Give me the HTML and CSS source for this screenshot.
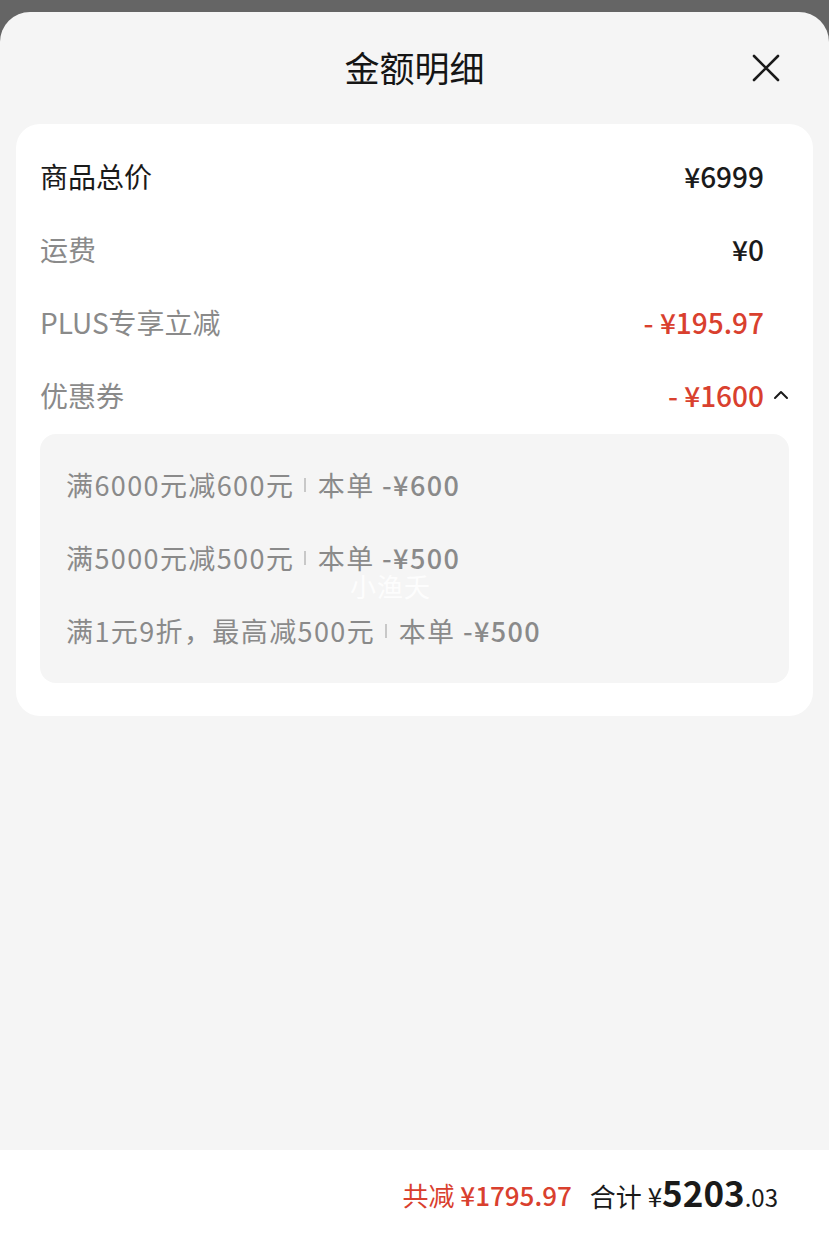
FILE: index.html
```html
<!DOCTYPE html>
<html lang="zh-CN">
<head>
<meta charset="utf-8">
<link rel="stylesheet" href="styles.css">
</head>
<body>
<div class="topstrip"></div>
<div class="panel">
  <div class="header">
    <div class="title">金额明细</div>
    <svg class="close" width="30" height="30" viewBox="0 0 30 30"><path d="M3 3 L27 27 M27 3 L3 27" stroke="#1a1a1a" stroke-width="2.6" fill="none" stroke-linecap="round"/></svg>
  </div>
  <div class="card">
    <div class="row">
      <span class="label dark">商品总价</span>
      <span class="value dark">¥6999</span>
      <span class="slot"></span>
    </div>
    <div class="row">
      <span class="label">运费</span>
      <span class="value dark">¥0</span>
      <span class="slot"></span>
    </div>
    <div class="row">
      <span class="label">PLUS专享立减</span>
      <span class="value red">- ¥195.97</span>
      <span class="slot"></span>
    </div>
    <div class="row">
      <span class="label">优惠券</span>
      <span class="value red">- ¥1600</span>
      <span class="slot"><svg width="16" height="12" viewBox="0 0 16 12"><path d="M2 9 L8 3 L14 9" stroke="#1a1a1a" stroke-width="2" fill="none" stroke-linecap="round" stroke-linejoin="round"/></svg></span>
    </div>
    <div class="coupons">
      <div class="cline">满6000元减600元<i class="sep"></i>本单 <em>-¥600</em></div>
      <div class="cline">满5000元减500元<i class="sep"></i>本单 <em>-¥500</em></div>
      <div class="cline">满1元9折，最高减500元<i class="sep"></i>本单 <em>-¥500</em></div>
      <div class="watermark">小渔夭</div>
    </div>
  </div>
  <div class="spacer"></div>
  <div class="footer">
    <span class="save">共减 <em>¥1795.97</em></span>
    <span class="total">合计 ¥<b>5203</b><small>.03</small></span>
  </div>
</div>
</body>
</html>
```
FILE: styles.css
```css
html, body {
  margin: 0;
  padding: 0;
}
body {
  background: #656565;
  font-family: "Noto Sans CJK SC", "Noto Sans", sans-serif;
  width: 829px;
  height: 1233px;
  overflow: hidden;
}
.topstrip {
  height: 12px;
}
.panel {
  height: 1221px;
  background: #f5f5f5;
  border-radius: 30px 30px 0 0;
  display: flex;
  flex-direction: column;
}
.header {
  height: 112px;
  display: flex;
  align-items: center;
  justify-content: center;
  position: relative;
}
.title {
  font-size: 35px;
  color: #151515;
  line-height: 1;
  margin-top: -3px;
}
.close {
  position: absolute;
  right: 48px;
  top: 41px;
}
.card {
  margin: 0 16px;
  background: #fff;
  border-radius: 24px;
  padding: 15px 24px 33px;
}
.row {
  height: 73px;
  display: flex;
  align-items: center;
  font-size: 28px;
}
.label {
  flex: 1;
  color: #8a8a8a;
}
.label.dark {
  color: #1a1a1a;
}
.value {
  font-weight: 500;
}
.dark {
  color: #1a1a1a;
}
.red {
  color: #d9402e;
}
.slot {
  width: 25px;
  display: flex;
  justify-content: flex-end;
  align-items: center;
}
.coupons {
  margin-top: 3px;
  background: #f5f5f5;
  border-radius: 16px;
  padding: 14px 26px 16px;
  position: relative;
}
.cline {
  height: 73px;
  display: flex;
  align-items: center;
  font-size: 27px;
  line-height: 1;
  letter-spacing: 1.4px;
  color: #8a8a8a;
  white-space: pre;
}
.cline em {
  font-style: normal;
  font-weight: 500;
}
.sep {
  display: inline-block;
  width: 1.5px;
  height: 14px;
  background: #c8c8c8;
  margin: 0 12px 0 10px;
}
.watermark {
  position: absolute;
  left: 310px;
  top: 139px;
  font-size: 26px;
  line-height: 1;
  letter-spacing: 1px;
  color: rgba(255,255,255,0.85);
}
.spacer {
  flex: 1;
}
.footer {
  height: 83px;
  background: #fff;
  display: flex;
  align-items: center;
  justify-content: flex-end;
  padding-right: 51px;
  gap: 18px;
  font-size: 26px;
}
.save {
  color: #d9402e;
  margin-top: 6px;
}
.save em {
  font-style: normal;
  font-weight: 500;
}
.total {
  color: #1a1a1a;
}
.total b {
  font-size: 35px;
  font-weight: 600;
}
.total small {
  font-size: 24px;
}
```
